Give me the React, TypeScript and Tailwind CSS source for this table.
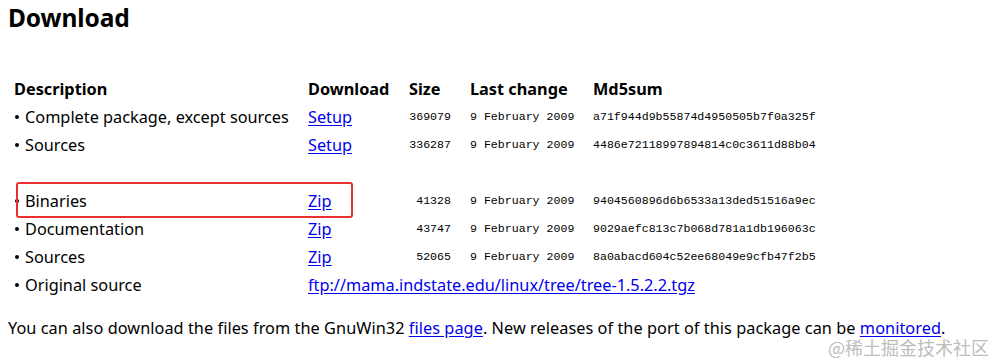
import React from "react";

const sans = { fontFamily: '"Noto Sans", "Noto Sans CJK SC", sans-serif' };

type Row = { desc: string; link: string; size?: string; date?: string; md5?: string; wide?: boolean };

const rows: (Row | null)[] = [
  { desc: "Complete package, except sources", link: "Setup", size: "369079", date: "9 February 2009", md5: "a71f944d9b55874d4950505b7f0a325f" },
  { desc: "Sources", link: "Setup", size: "336287", date: "9 February 2009", md5: "4486e72118997894814c0c3611d88b04" },
  null,
  { desc: "Binaries", link: "Zip", size: "41328", date: "9 February 2009", md5: "9404560896d6b6533a13ded51516a9ec" },
  { desc: "Documentation", link: "Zip", size: "43747", date: "9 February 2009", md5: "9029aefc813c7b068d781a1db196063c" },
  { desc: "Sources", link: "Zip", size: "52065", date: "9 February 2009", md5: "8a0abacd604c52ee68049e9cfb47f2b5" },
  { desc: "Original source", link: "ftp://mama.indstate.edu/linux/tree/tree-1.5.2.2.tgz", wide: true },
];

const mono = "font-['Liberation_Mono',monospace] text-[11.6px] text-black";

export default function App() {
  return (
    <div className="relative w-[994px] h-[361px] bg-white text-black overflow-hidden" style={sans}>
      <div className="px-2 pt-0">
        <h1 className="text-[24.5px] font-bold leading-[35px] tracking-[-0.1px]">Download</h1>
        <div className="mt-[40px] ml-[6px] text-[16.3px]">
          <div className="grid grid-cols-[294px_101px_61px_123px_1fr] h-[28px] items-center font-bold">
            <div>Description</div>
            <div>Download</div>
            <div>Size</div>
            <div>Last change</div>
            <div>Md5sum</div>
          </div>
          {rows.map((r, i) =>
            r === null ? (
              <div key={i} className="h-[28px]" />
            ) : (
              <div key={i} className="grid grid-cols-[294px_101px_61px_123px_1fr] h-[28px] items-center">
                <div className="flex items-center">
                  <span className="inline-block w-[4px] h-[4px] rounded-full bg-black ml-[1px] mr-[6px]" />
                  <span>{r.desc}</span>
                </div>
                {r.wide ? (
                  <div className="col-span-4">
                    <a className="text-[#0000ee] underline underline-offset-2">{r.link}</a>
                  </div>
                ) : (
                  <>
                    <div>
                      <a className="text-[#0000ee] underline underline-offset-2">{r.link}</a>
                    </div>
                    <div className={`${mono} w-[42px] text-right`}>{r.size}</div>
                    <div className={mono}>{r.date}</div>
                    <div className={mono}>{r.md5}</div>
                  </>
                )}
              </div>
            )
          )}
        </div>
        <p className="mt-[19px] text-[16.3px] leading-[20px] tracking-[0.05px]">
          You can also download the files from the GnuWin32{" "}
          <a className="text-[#0000ee] underline underline-offset-2">files page</a>. New releases of the port of this
          package can be <a className="text-[#0000ee] underline underline-offset-2">monitored</a>.
        </p>
      </div>
      <div className="absolute left-[16px] top-[182px] w-[337px] h-[36px] border-2 border-[#e8312f] rounded-[3px]" />
      <div className="absolute left-[828px] top-[339px] text-[18px] text-[#bdbdbd] leading-[16px]" style={{ fontFamily: '"Noto Sans CJK SC", sans-serif' }}>
        @稀土掘金技术社区
      </div>
    </div>
  );
}
